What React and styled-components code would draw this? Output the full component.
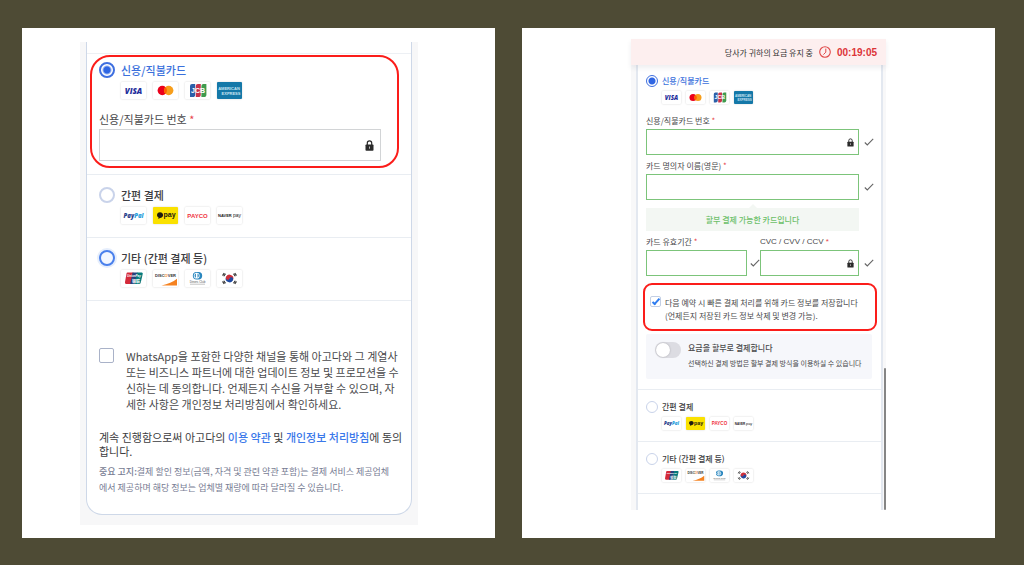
import styled, { createGlobalStyle, css } from "styled-components";

const cardBrands = ["visa", "mastercard", "jcb", "amex"];
const easyBrands = ["paypal", "kakaopay", "payco", "naverpay"];
const otherBrands = ["unionpay", "discover", "diners", "korea"];

export default function App() {
  return (
    <>
      <GlobalStyle />
      <Page>
        <PaymentPanel />
        <CardFormPanel />
      </Page>
    </>
  );
}

function PaymentPanel() {
  return (
    <Panel $pad="14px 77px 13px 58px">
      <Phone>
        <Sheet>
          <SheetTop />
          <CardSection>
            <Highlight>
              <PaymentOption id="pay-card" group="pay" label="신용/직불카드" brands={cardBrands} defaultChecked />
              <FieldLabel htmlFor="pay-card-number">
                신용/직불카드 번호 <Required>*</Required>
              </FieldLabel>
              <InputBox>
                <TextInput id="pay-card-number" />
                <LockIcon />
              </InputBox>
            </Highlight>
          </CardSection>
          <OptionSection>
            <PaymentOption id="pay-easy" group="pay" label="간편 결제" brands={easyBrands} />
          </OptionSection>
          <OptionSection>
            <PaymentOption id="pay-other" group="pay" label="기타 (간편 결제 등)" brands={otherBrands} active />
          </OptionSection>
          <Agreement>
            <Consent>
              <Checkbox type="checkbox" id="consent" />
              <label htmlFor="consent">
                WhatsApp을 포함한 다양한 채널을 통해 아고다와 그 계열사
                <br />
                또는 비즈니스 파트너에 대한 업데이트 정보 및 프로모션을 수
                <br />
                신하는 데 동의합니다. 언제든지 수신을 거부할 수 있으며, 자
                <br />
                세한 사항은 개인정보 처리방침에서 확인하세요.
              </label>
            </Consent>
            <Terms>
              계속 진행함으로써 아고다의 <a href="#terms">이용 약관</a> 및 <a href="#privacy">개인정보 처리방침</a>에 동의
              <br />
              합니다.
            </Terms>
            <Notice>
              <strong>중요 고지:</strong>결제 할인 정보(금액, 자격 및 관련 약관 포함)는 결제 서비스 제공업체
              <br />
              에서 제공하며 해당 정보는 업체별 재량에 따라 달라질 수 있습니다.
            </Notice>
          </Agreement>
        </Sheet>
      </Phone>
    </Panel>
  );
}

function CardFormPanel() {
  return (
    <Panel $pad="11px 109px 28px">
      <HoldBar>
        <span>당사가 귀하의 요금 유지 중</span>
        <ClockIcon />
        <time>00:19:05</time>
      </HoldBar>
      <ScrollBody>
        <SmallSheet>
          <FormSection>
            <PaymentOption id="form-card" group="form" label="신용/직불카드" brands={cardBrands} defaultChecked small />
            <FormField $first>
              <FieldLabel $small htmlFor="form-number">
                신용/직불카드 번호 <Required>*</Required>
              </FieldLabel>
              <ValidRow>
                <InputBox $valid>
                  <TextInput id="form-number" />
                  <LockIcon small />
                </InputBox>
                <CheckIcon />
              </ValidRow>
            </FormField>
            <FormField>
              <FieldLabel $small htmlFor="form-name">
                카드 명의자 이름(영문) <Required>*</Required>
              </FieldLabel>
              <ValidRow>
                <InputBox $valid>
                  <TextInput id="form-name" />
                </InputBox>
                <CheckIcon />
              </ValidRow>
            </FormField>
            <InstallmentNote>할부 결제 가능한 카드입니다</InstallmentNote>
            <FieldPair>
              <FormField>
                <FieldLabel $small htmlFor="form-expiry">
                  카드 유효기간 <Required>*</Required>
                </FieldLabel>
                <ValidRow $tight>
                  <InputBox $valid>
                    <TextInput id="form-expiry" />
                  </InputBox>
                  <CheckIcon />
                </ValidRow>
              </FormField>
              <FormField>
                <FieldLabel $small $latin htmlFor="form-cvc">
                  CVC / CVV / CCV <Required>*</Required>
                </FieldLabel>
                <ValidRow>
                  <InputBox $valid>
                    <TextInput id="form-cvc" />
                    <LockIcon small />
                  </InputBox>
                  <CheckIcon />
                </ValidRow>
              </FormField>
            </FieldPair>
            <SaveCard>
              <Checkbox $small type="checkbox" id="save-card" defaultChecked />
              <label htmlFor="save-card">
                다음 예약 시 빠른 결제 처리를 위해 카드 정보를 저장합니다
                <br />
                (언제든지 저장된 카드 정보 삭제 및 변경 가능).
              </label>
            </SaveCard>
            <Installment>
              <Switch type="checkbox" role="switch" id="installment" />
              <label htmlFor="installment">
                <strong>요금을 할부로 결제합니다</strong>
                <small>선택하신 결제 방법은 할부 결제 방식을 이용하실 수 있습니다</small>
              </label>
            </Installment>
          </FormSection>
          <OptionSection $small>
            <PaymentOption id="form-easy" group="form" label="간편 결제" brands={easyBrands} small />
          </OptionSection>
          <OptionSection $small>
            <PaymentOption id="form-other" group="form" label="기타 (간편 결제 등)" brands={otherBrands} small />
          </OptionSection>
        </SmallSheet>
        <ScrollThumb />
      </ScrollBody>
    </Panel>
  );
}

function PaymentOption({ id, group, label, brands, small, active, defaultChecked }) {
  return (
    <Option $small={small}>
      <Radio type="radio" id={id} name={group} defaultChecked={defaultChecked} $small={small} $active={active} />
      <OptionTitle htmlFor={id} $small={small} $selected={defaultChecked}>
        {label}
      </OptionTitle>
      <BrandRow $small={small}>
        {brands.map((name) => (
          <Brand key={name} $small={small} $name={name} viewBox="0 0 25 17" role="img" aria-label={name}>
            {brandArt[name]}
          </Brand>
        ))}
      </BrandRow>
    </Option>
  );
}

const sans = "'Liberation Sans', sans-serif";

const brandArt = {
  visa: (
    <text x="12.5" y="11.6" textAnchor="middle" fontFamily="'Open Sans', sans-serif" fontSize="8" fontWeight="800" fontStyle="italic" fill="#1f2f9c">
      VISA
    </text>
  ),
  mastercard: (
    <>
      <circle cx="9.3" cy="8.5" r="4.7" fill="#eb001b" />
      <circle cx="15.7" cy="8.5" r="4.7" fill="#f79e1b" />
      <path d="M12.5 5.1a4.7 4.7 0 0 1 0 6.8a4.7 4.7 0 0 1 0-6.8z" fill="#ff5f00" />
    </>
  ),
  jcb: (
    <>
      <path d="M7 2h3.2v10.4A2.6 2.6 0 0 1 7.6 15H5V4a2 2 0 0 1 2-2z" fill="#2b5fa8" />
      <path d="M12.8 2h3v10.4a2.6 2.6 0 0 1-2.6 2.6h-2.4V4a2 2 0 0 1 2-2z" fill="#c8324a" />
      <path d="M18.4 2h3v10.4a2.6 2.6 0 0 1-2.6 2.6h-2.4V4a2 2 0 0 1 2-2z" fill="#3f9a4d" />
      <text x="13" y="10.8" textAnchor="middle" fontFamily={sans} fontSize="7" fontWeight="700" fill="#fff">
        JCB
      </text>
    </>
  ),
  amex: (
    <g fontFamily={sans} fontSize="4" fontWeight="700" fill="#c9e4f2" textAnchor="middle">
      <text x="12" y="7.5">AMERICAN</text>
      <text x="14" y="12.5">EXPRESS</text>
    </g>
  ),
  paypal: (
    <text x="12.5" y="10.8" textAnchor="middle" fontFamily="'Open Sans', sans-serif" fontSize="6" fontWeight="800" fontStyle="italic" fill="#27408b">
      Pay<tspan fill="#2aa0dc">Pal</tspan>
    </text>
  ),
  kakaopay: (
    <>
      <path d="M7 5.2c1.8 0 3.1 1.2 3.1 2.8S8.8 10.9 7 10.9l-1.7 1 .3-1.5C4.6 9.9 4 9 4 8c0-1.6 1.2-2.8 3-2.8z" fill="#1d1a12" />
      <text x="16.5" y="10.4" textAnchor="middle" fontFamily={sans} fontSize="7" fontWeight="700" fill="#1d1a12">
        pay
      </text>
    </>
  ),
  payco: (
    <text x="12.5" y="10.6" textAnchor="middle" fontFamily={sans} fontSize="6" fontWeight="700" fill="#f0323c">
      PAYCO
    </text>
  ),
  naverpay: (
    <text x="12.5" y="10.2" textAnchor="middle" fontFamily={sans} fontSize="4" fontWeight="700" fill="#222">
      NAVER <tspan fontSize="5" fontWeight="400">pay</tspan>
    </text>
  ),
  unionpay: (
    <>
      <path d="M6.5 2.5h6L10.2 14H5.5A1.5 1.5 0 0 1 4 12.1l1.5-8.6a1.3 1.3 0 0 1 1-1z" fill="#d42a3a" />
      <path d="M11.5 2.5h5L14.3 14H9.2z" fill="#27427c" />
      <path d="M16 2.5h4.5a1.2 1.2 0 0 1 1.2 1.6l-2 8.6a1.7 1.7 0 0 1-1.6 1.3h-4.5z" fill="#067b7c" />
      <text x="13" y="6.6" textAnchor="middle" fontFamily={sans} fontSize="3" fontWeight="700" fontStyle="italic" fill="#fff">
        UnionPay
      </text>
      <text x="15" y="12.6" textAnchor="middle" fontFamily="'Noto Sans CJK SC', sans-serif" fontSize="4" fontWeight="700" fill="#fff">
        银联
      </text>
    </>
  ),
  discover: (
    <>
      <path d="M24 8.8v6.7H8.5C15 14.3 20 12 24 8.8z" fill="#f58220" />
      <text x="12.5" y="6.8" textAnchor="middle" fontFamily={sans} fontSize="4" fontWeight="700" fill="#333">
        DISC<tspan fill="#f58220">O</tspan>VER
      </text>
    </>
  ),
  diners: (
    <>
      <path d="M11.5 2h2a3.7 3.7 0 0 1 0 7.4h-2a3.7 3.7 0 0 1 0-7.4z" fill="#2a87bf" />
      <circle cx="11.7" cy="5.7" r="2.9" fill="#fff" />
      <path d="M10.9 3.6a2.3 2.3 0 0 0 0 4.2zM12.5 3.6a2.3 2.3 0 0 1 0 4.2z" fill="#2a87bf" />
      <text x="12.5" y="12.6" textAnchor="middle" fontFamily={sans} fontSize="3" fill="#555">
        Diners Club
      </text>
      <path d="M5 14.2h15" stroke="#aaa" strokeWidth=".7" />
    </>
  ),
  korea: (
    <>
      <g transform="rotate(20 12.5 8.5)">
        <path d="M8.7 8.5a3.8 3.8 0 0 1 7.6 0z" fill="#cd2e3a" />
        <path d="M16.3 8.5a3.8 3.8 0 0 1-7.6 0z" fill="#1f4aa0" />
        <circle cx="10.6" cy="8.5" r="1.9" fill="#cd2e3a" />
        <circle cx="14.4" cy="8.5" r="1.9" fill="#1f4aa0" />
      </g>
      <path
        d="M5.5 5.5L7.3 3M6.7 6.3l1.8-2.5M17.7 3l1.8 2.5M16.5 3.8l1.8 2.5M5.5 11.5L7.3 14M6.7 10.7l1.8 2.5M17.7 14l1.8-2.5M16.5 13.2l1.8-2.5"
        stroke="#222"
        strokeWidth="1.1"
      />
    </>
  ),
};

function LockIcon({ small }) {
  return (
    <svg width={small ? 7 : 9} height={small ? 9 : 11} viewBox="0 0 9 11" aria-hidden="true">
      <path d="M2.3 5V3a2.2 2.2 0 0 1 4.4 0v2" fill="none" stroke="#2b2b2b" strokeWidth="1.2" />
      <rect x=".5" y="4.5" width="8" height="6.3" rx=".8" fill="#2b2b2b" />
      <path d="M4.5 6.5v2.2" stroke="#bbb" strokeWidth="1" />
    </svg>
  );
}

function CheckIcon() {
  return (
    <Tick viewBox="0 0 10 8" aria-hidden="true">
      <path d="M.8 4.5L3.3 7L9.2.8" fill="none" stroke="#666" strokeWidth="1.1" />
    </Tick>
  );
}

function ClockIcon() {
  return (
    <svg width="12" height="12" viewBox="0 0 12 12" fill="none" stroke="#e04848" aria-hidden="true">
      <circle cx="6" cy="6" r="5.3" strokeWidth="1.1" />
      <path d="M6.8 2.6V6.2L4.4 8.6" strokeWidth="1" />
    </svg>
  );
}

const GlobalStyle = createGlobalStyle`
  *, *::before, *::after {
    box-sizing: border-box;
  }

  body {
    margin: 0;
    background: #4e4b35;
    color: #4a4a4c;
    font-family: "Noto Sans CJK KR", "Liberation Sans", sans-serif;
  }
`;

const Page = styled.main`
  min-height: 100vh;
  padding: 28px 29px 27px 22px;
  display: grid;
  grid-template-columns: minmax(0, 1fr) minmax(0, 1fr);
  gap: 27px;
`;

const Panel = styled.section`
  padding: ${(p) => p.$pad};
  background: #fff;
  white-space: nowrap;
`;

const Phone = styled.div`
  padding: 0 6px 10px;
  background: #f7f7f8;
`;

const Sheet = styled.div`
  border: 1px solid #ced8e8;
  border-top: 0;
  border-radius: 0 0 16px 16px;
  background: #fff;
`;

const SheetTop = styled.div`
  height: 12px;
  border-bottom: 1px solid #edf0f4;
`;

const CardSection = styled.div`
  padding: 1px 12px 6px 3px;
  border-bottom: 1px solid #e9edf2;
`;

const Highlight = styled.div`
  padding: 5px 16px 5px 7px;
  border: 2px solid #fb1d1a;
  border-radius: 20px;
`;

const OptionSection = styled.div`
  padding: ${(p) => (p.$small ? "11px 8px" : "12px 12px 13px")};
  border-bottom: 1px solid #e9edf2;
`;

const Option = styled.div`
  display: grid;
  grid-template-columns: auto 1fr;
  column-gap: ${(p) => (p.$small ? 4 : 6)}px;
  row-gap: 4px;
`;

const Radio = styled.input`
  appearance: none;
  width: ${(p) => (p.$small ? 12 : 16)}px;
  height: ${(p) => (p.$small ? 12 : 16)}px;
  margin: 0;
  border: ${(p) => (p.$small ? 1 : 2)}px solid #c9d3ea;
  border-radius: 50%;
  background: #fff;

  &:checked {
    border-color: #3e6fe0;
    background: radial-gradient(circle, #2f66e3 3px, #fff ${(p) => (p.$small ? 4 : 5)}px);
  }

  ${(p) =>
    p.$active &&
    css`
      border-color: #4a80ec;
      background: #f3f7ff;
      box-shadow: 0 0 0 2px #e6eefc;
    `}
`;

const OptionTitle = styled.label`
  color: ${(p) => (p.$selected ? "#3a70dc" : "#3c3c40")};
  font-size: ${(p) => (p.$small ? 8 : 11)}px;
  font-weight: 500;
  line-height: ${(p) => (p.$small ? 12 : 16)}px;
`;

const BrandRow = styled.div`
  grid-column: 2;
  display: flex;
  gap: ${(p) => (p.$small ? 5 : 7)}px;
`;

const tileColors = { kakaopay: "#fae100", amex: "#1478a8" };

const Brand = styled.svg`
  width: ${(p) => (p.$small ? 19 : 25)}px;
  height: ${(p) => (p.$small ? 13 : 17)}px;
  border-radius: 1px;
  background: ${(p) => tileColors[p.$name] || "#fff"};
  box-shadow: 0 0 2px rgba(0, 0, 0, 0.18);
`;

const FieldLabel = styled.label`
  display: block;
  margin: ${(p) => (p.$small ? "0 0 2px" : "12px 0 2px")};
  font-family: ${(p) => (p.$latin ? sans : "inherit")};
  font-size: ${(p) => (p.$small ? 8 : 11)}px;
  line-height: ${(p) => (p.$small ? 12 : 16)}px;
`;

const Required = styled.span`
  color: #e8434a;
`;

const InputBox = styled.div`
  flex: 1;
  min-width: 0;
  height: ${(p) => (p.$valid ? 26 : 32)}px;
  padding-right: ${(p) => (p.$valid ? 4 : 6)}px;
  display: flex;
  align-items: center;
  border: 1px solid ${(p) => (p.$valid ? "#7cc47a" : "#d2d4d6")};
  background: #fff;
`;

const TextInput = styled.input`
  flex: 1;
  min-width: 0;
  height: 100%;
  padding: 0 8px;
  border: 0;
  outline: 0;
  background: transparent;
  font: inherit;
  font-size: 11px;
`;

const Checkbox = styled.input`
  appearance: none;
  flex: none;
  width: ${(p) => (p.$small ? 11 : 15)}px;
  height: ${(p) => (p.$small ? 11 : 15)}px;
  margin: 0;
  border: 1px solid ${(p) => (p.$small ? "#c3cfe4" : "#a9b2c8")};
  border-radius: 2px;
  display: grid;
  place-items: center;

  &:checked::before {
    content: "";
    width: 8px;
    height: 4px;
    border: solid #2f7df0;
    border-width: 0 0 2px 2px;
    transform: translateY(-1px) rotate(-48deg);
  }
`;

const Agreement = styled.div`
  padding: 47px 12px 18px;
`;

const Consent = styled.div`
  display: flex;
  gap: 12px;
  font-size: 11px;
  line-height: 16px;
`;

const Terms = styled.p`
  margin: 18px 0 6px;
  color: #3c3c40;
  font-size: 11px;
  line-height: 14px;

  a {
    color: #3a78ea;
    font-weight: 500;
    text-decoration: none;
  }
`;

const Notice = styled.p`
  margin: 0;
  color: #777c93;
  font-size: 9px;
  line-height: 16px;

  strong {
    font-weight: 500;
  }
`;

const HoldBar = styled.header`
  position: relative;
  z-index: 1;
  height: 26px;
  padding-right: 9px;
  display: flex;
  align-items: center;
  justify-content: flex-end;
  gap: 6px;
  background: #fdefef;
  box-shadow: 0 3px 5px rgba(40, 40, 60, 0.08);
  color: #333;
  font-size: 8px;

  time {
    color: #dc3438;
    font-family: "Liberation Sans", sans-serif;
    font-size: 10px;
    font-weight: 700;
  }
`;

const ScrollBody = styled.div`
  position: relative;
  padding: 0 3px 0 5px;
  background: #f8f8f9;
`;

const SmallSheet = styled.div`
  padding-bottom: 16px;
  border: solid #e3e8f0;
  border-width: 0 2px;
  background: #fff;
`;

const ScrollThumb = styled.div`
  position: absolute;
  top: 303px;
  right: 0;
  bottom: 0;
  width: 2px;
  border-radius: 1px;
  background: #858585;
`;

const FormSection = styled.div`
  padding: 10px 7px 10px 8px;
  border-bottom: 1px solid #e9edf2;
`;

const FormField = styled.div`
  min-width: 0;
  margin-top: ${(p) => (p.$first ? 11 : 5)}px;
`;

const ValidRow = styled.div`
  display: flex;
  align-items: center;
  gap: ${(p) => (p.$tight ? 3 : 5)}px;
`;

const Tick = styled.svg`
  flex: none;
  width: 10px;
  height: 8px;
`;

const FieldPair = styled.div`
  display: grid;
  grid-template-columns: minmax(0, 1fr) minmax(0, 1fr);
`;

const InstallmentNote = styled.div`
  position: relative;
  margin: 8px 15px 0 0;
  background: #f3f7f3;
  color: #6cc069;
  font-size: 8px;
  font-weight: 500;
  line-height: 23px;
  text-align: center;

  &::before {
    content: "";
    position: absolute;
    top: -4px;
    left: 50%;
    border: 4px solid transparent;
    border-top: 0;
    border-bottom-color: #f3f7f3;
    transform: translateX(-50%);
  }
`;

const SaveCard = styled.div`
  margin: 7px -3px 0;
  padding: 11px 5px 7px;
  display: flex;
  gap: 4px;
  border: 2px solid #fb1d1a;
  border-radius: 9px;
  font-size: 8px;
  line-height: 13px;
`;

const Installment = styled.div`
  margin: 3px 2px 0 0;
  padding: 8px 9px 10px;
  display: flex;
  gap: 7px;
  background: #f6f7fb;
  border-radius: 2px;

  strong,
  small {
    display: block;
    font-size: 8px;
    line-height: 12px;
  }

  strong {
    font-weight: 500;
  }

  small {
    margin-top: 3px;
    font-size: 7px;
  }
`;

const Switch = styled.input`
  appearance: none;
  flex: none;
  width: 26px;
  height: 16px;
  margin: 0;
  border-radius: 8px;
  background: #dcdce2;

  &::before {
    content: "";
    display: block;
    width: 14px;
    height: 14px;
    margin: 1px;
    border-radius: 50%;
    background: #fff;
    box-shadow: 0 0 2px rgba(0, 0, 0, 0.25);
  }

  &:checked::before {
    margin-left: 11px;
  }
`;
